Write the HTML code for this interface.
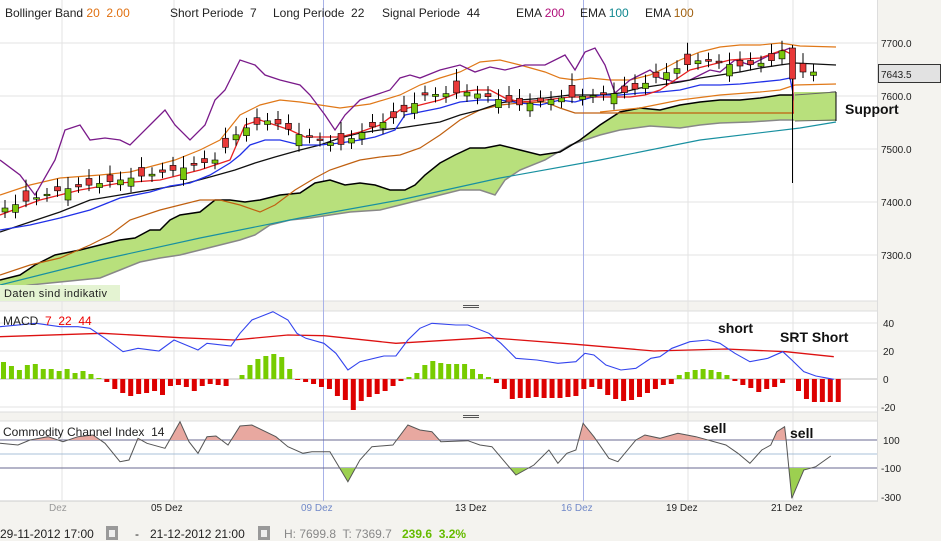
<!DOCTYPE html>
<html><head><meta charset="utf-8"><style>
html,body{margin:0;padding:0;width:941px;height:541px;overflow:hidden;background:#f4f3ef;font-family:"Liberation Sans",sans-serif;}
svg{position:absolute;left:0;top:0}
text{white-space:pre}
</style></head><body>
<svg id="s" width="941" height="541" xmlns="http://www.w3.org/2000/svg" font-family="Liberation Sans, sans-serif">
<defs>
<clipPath id="cu"><rect x="0" y="410" width="878" height="30"/></clipPath>
<clipPath id="cd"><rect x="0" y="468" width="878" height="40"/></clipPath>
</defs>
<rect x="0" y="0" width="878" height="301" fill="#fff"/>
<rect x="0" y="311" width="878" height="101" fill="#fff"/>
<rect x="0" y="421" width="878" height="80" fill="#fff"/>
<line x1="0" y1="301" x2="878" y2="301" stroke="#ddd"/>
<line x1="0" y1="311" x2="878" y2="311" stroke="#ddd"/>
<line x1="0" y1="412" x2="878" y2="412" stroke="#ddd"/>
<line x1="0" y1="421" x2="878" y2="421" stroke="#ddd"/>
<line x1="0" y1="501" x2="878" y2="501" stroke="#ccc"/>
<line x1="877.5" y1="0" x2="877.5" y2="501" stroke="#ddd"/>
<g stroke="#555" stroke-width="1"><line x1="463" y1="305.5" x2="479" y2="305.5"/><line x1="463" y1="307.5" x2="479" y2="307.5"/><line x1="463" y1="415.5" x2="479" y2="415.5"/><line x1="463" y1="417.5" x2="479" y2="417.5"/></g>
<g stroke="#e3e3e3">
<line x1="0" y1="43" x2="877" y2="43"/><line x1="0" y1="96" x2="877" y2="96"/><line x1="0" y1="149" x2="877" y2="149"/><line x1="0" y1="202" x2="877" y2="202"/><line x1="0" y1="255" x2="877" y2="255"/>
<line x1="0" y1="323" x2="877" y2="323"/><line x1="0" y1="351" x2="877" y2="351"/><line x1="0" y1="407" x2="877" y2="407"/>
<line x1="62" y1="0" x2="62" y2="501"/><line x1="174" y1="0" x2="174" y2="501"/><line x1="688" y1="0" x2="688" y2="501"/><line x1="793" y1="0" x2="793" y2="501"/>
</g>
<g stroke="#a8b2e8"><line x1="323.5" y1="0" x2="323.5" y2="501"/><line x1="583.5" y1="0" x2="583.5" y2="501"/></g>
<line x1="0" y1="379" x2="877" y2="379" stroke="#bbb"/>
<g stroke="#6a6a90"><line x1="0" y1="440" x2="877" y2="440"/><line x1="0" y1="468" x2="877" y2="468"/></g>
<line x1="0" y1="454" x2="877" y2="454" stroke="#a8c0d8"/>
<g id="main"></g>
<g id="macd"></g>
<g id="cci"></g>
<g font-size="12" fill="#222">
<text x="5" y="17">Bollinger Band <tspan fill="#e07010">20  2.00</tspan></text>
<text x="170" y="17">Short Periode  7</text>
<text x="273" y="17">Long Periode  22</text>
<text x="382" y="17">Signal Periode  44</text>
<text x="516" y="17">EMA <tspan fill="#b0107a">200</tspan></text>
<text x="580" y="17">EMA <tspan fill="#108890">100</tspan></text>
<text x="645" y="17">EMA <tspan fill="#a06010">100</tspan></text>
<text x="3" y="325">MACD  <tspan fill="#e00">7  22  44</tspan></text>
<text x="3" y="436">Commodity Channel Index  14</text>
</g>
<rect x="0" y="285" width="120" height="16" fill="#e4f3d2"/>
<text x="4" y="297" font-size="11" fill="#222" letter-spacing="0.4">Daten sind indikativ</text>
<g font-size="14" font-weight="bold" fill="#111">
<text x="845" y="114">Support</text>
<text x="718" y="333">short</text>
<text x="780" y="342">SRT Short</text>
<text x="703" y="433">sell</text>
<text x="790" y="438">sell</text>
</g>
<g font-size="10" fill="#222">
<text x="881" y="47">7700.0</text><text x="881" y="100">7600.0</text><text x="881" y="153">7500.0</text><text x="881" y="206">7400.0</text><text x="881" y="259">7300.0</text>
<text x="883" y="327">40</text><text x="883" y="355">20</text><text x="883" y="383">0</text><text x="881" y="411">-20</text>
<text x="883" y="444">100</text><text x="881" y="472">-100</text><text x="881" y="501">-300</text>
</g>
<rect x="878.5" y="64.5" width="62" height="18" fill="#e2e2e2" stroke="#333"/>
<text x="881" y="78" font-size="10" fill="#222">7643.5</text>
<g font-size="10">
<text x="49" y="511" fill="#999">Dez</text>
<text x="151" y="511" fill="#222">05 Dez</text>
<text x="301" y="511" fill="#7088c8">09 Dez</text>
<text x="455" y="511" fill="#222">13 Dez</text>
<text x="561" y="511" fill="#7088c8">16 Dez</text>
<text x="666" y="511" fill="#222">19 Dez</text>
<text x="771" y="511" fill="#222">21 Dez</text>
</g>
<g font-size="12" fill="#222">
<text x="0" y="538">29-11-2012 17:00</text>
<text x="135" y="538">-</text>
<text x="150" y="538">21-12-2012 21:00</text>
<text x="284" y="538" fill="#888">H: 7699.8  T: 7369.7</text>
<text x="402" y="538" fill="#66bb00" font-weight="bold">239.6  3.2%</text>
</g>
<g><rect x="106" y="526" width="12" height="14" fill="#999"/><rect x="109" y="530" width="6" height="7" fill="#eee"/><rect x="258" y="526" width="12" height="14" fill="#999"/><rect x="261" y="530" width="6" height="7" fill="#eee"/></g>
</svg>
<script>
const NS="http://www.w3.org/2000/svg";
function el(p,t,a){const e=document.createElementNS(NS,t);for(const k in a)e.setAttribute(k,a[k]);document.getElementById(p).appendChild(e);return e;}
function pts(a){return a.map(p=>p.join(",")).join(" ");}
function line(p,a,c,w){el(p,"polyline",{points:pts(a),fill:"none",stroke:c,"stroke-width":w||1});}
function interp(a,x){for(let i=1;i<a.length;i++){if(x<=a[i][0]){const t=(x-a[i-1][0])/(a[i][0]-a[i-1][0]);return a[i-1][1]+t*(a[i][1]-a[i-1][1]);}}return a[a.length-1][1];}
const up=[[0,280],[20,275],[35,265],[55,255],[80,250],[100,245],[120,240],[135,238],[150,230],[160,230],[170,220],[180,215],[200,212],[215,200],[230,200],[245,202],[260,200],[280,195],[300,193],[315,183],[330,180],[345,185],[360,183],[375,185],[390,190],[405,190],[415,185],[425,175],[440,163],[455,155],[470,148],[485,148],[500,145],[520,150],[540,155],[560,152],[580,140],[600,125],[620,112],[640,108],[660,110],[680,105],[700,102],[720,100],[740,100],[760,98],[780,95],[790,95],[810,95],[836,92]];
const lo=[[0,290],[30,285],[60,282],[100,278],[120,270],[140,262],[160,258],[180,255],[200,250],[220,245],[240,240],[255,235],[270,225],[290,220],[310,218],[330,215],[350,212],[380,210],[400,205],[420,200],[440,195],[460,190],[480,190],[495,195],[505,180],[520,170],[545,160],[570,145],[600,135],[620,130],[650,126],[680,128],[700,125],[720,123],[750,122],[780,120],[800,120],[836,116]];
el("main","polygon",{points:pts(up.concat(lo.slice().reverse())),fill:"#b8e07c"});
line("main",lo,"#888",1.5);line("main",up,"#000",1.5);
line("main",[[0,285],[100,260],[200,238],[300,218],[400,200],[500,178],[600,160],[700,140],[800,128],[836,122]],"#1890a0",1.2);
line("main",[[0,275],[30,265],[60,258],[90,245],[110,235],[130,220],[160,210],[180,205],[200,200],[220,200],[240,205],[260,212],[275,205],[295,190],[315,178],[330,170],[345,165],[360,160],[380,157],[400,155],[420,148],[440,135],[460,120],[480,110],[500,105],[520,103],[545,102],[560,108],[575,113],[612,113],[700,113],[836,113]],"#c06010",1.2);
line("main",[[0,195],[30,185],[60,178],[100,175],[130,172],[175,160],[200,150],[220,140],[240,115],[260,105],[280,100],[300,102],[320,105],[340,108],[370,104],[400,95],[420,85],[440,78],[460,72],[480,62],[500,60],[520,65],[545,72],[560,78],[575,80],[590,78],[610,80],[630,80],[650,75],[665,68],[680,60],[700,52],[720,47],[740,45],[760,45],[780,43],[800,46],[836,47]],"#e07818",1.2);
line("main",[[600,112],[640,108],[680,100],[720,95],[760,92],[780,90],[795,85],[836,84]],"#e07818",1.2);
line("main",[[0,160],[20,175],[35,195],[55,160],[65,130],[80,125],[90,140],[105,138],[120,140],[130,145],[150,125],[165,110],[175,125],[190,140],[205,125],[215,100],[225,90],[240,60],[255,65],[265,75],[280,80],[300,85],[310,95],[325,115],[335,130],[345,115],[360,100],[375,95],[390,90],[400,78],[410,75],[420,78],[440,70],[460,65],[475,72],[490,67],[505,70],[525,65],[545,65],[565,55],[575,70],[585,52],[595,48],[605,65],[615,93],[630,80],[640,75],[650,70],[660,78],[675,82],[690,80],[700,75],[710,70],[720,72],[735,60],[750,65],[760,60],[770,55],[780,52],[790,48]],"#7a1a8a",1.3);
line("main",[[0,232],[30,222],[60,212],[90,200],[120,195],[150,190],[180,185],[210,177],[235,170],[255,163],[275,157],[300,150],[320,145],[340,138],[360,133],[380,130],[400,128],[420,125],[440,122],[460,115],[480,110],[500,103],[520,100],[545,98],[570,95],[600,95],[620,93],[640,88],[660,85],[680,82],[700,78],[720,75],[740,72],[760,68],[780,65],[795,63],[836,65]],"#111",1.3);
line("main",[[0,230],[30,225],[60,218],[90,210],[120,198],[150,192],[170,186],[190,183],[210,175],[230,163],[240,155],[250,145],[265,140],[280,140],[300,145],[320,145],[340,143],[360,140],[375,137],[395,130],[405,115],[420,112],[440,108],[460,102],[480,100],[500,100],[520,103],[540,105],[560,100],[575,102],[600,95],[620,95],[640,93],[660,92],[680,90],[700,85],[720,85],[740,84],[760,82],[780,80],[790,78],[797,113]],"#2030e8",1.3);
line("main",[[0,215],[40,200],[80,190],[120,183],[160,180],[200,170],[230,160],[245,125],[260,120],[275,125],[290,130],[305,137],[320,137],[340,137],[360,132],[380,125],[400,110],[420,105],[440,100],[460,92],[475,90],[490,90],[505,98],[520,102],[545,100],[570,97],[600,97],[630,97],[645,95],[660,90],[675,80],[690,70],[710,65],[730,60],[760,58],[783,50],[793,55],[793,113],[836,113]],"#e82020",1.3);
el("main","rect",{x:794,y:92,width:42,height:29,fill:"#b8e07c"});
line("main",[[795,95],[836,92]],"#666",1);line("main",[[795,121],[836,120]],"#666",1);line("main",[[836,92],[836,121]],"#000",1);
const cp=[[5,208],[60,190],[120,180],[175,170],[215,160],[240,130],[270,120],[300,135],[340,145],[370,128],[400,115],[425,95],[470,92],[520,105],[560,98],[600,95],[630,92],[660,75],[700,60],[740,66],[770,62],[785,48],[795,72],[836,72]];
for(let i=0;i<78;i++){const x=5+i*10.5;if(x>830)break;
 let c=interp(cp,x);const n=Math.sin(i*2.3)*8+Math.cos(i*1.1)*4;const o=c+n;const g=o>c;
 let top=Math.min(o,c),bot=Math.max(o,c);if(bot-top<1.5)bot=top+1.5;
 if(x>787&&x<797){el("main","line",{x1:x,y1:45,x2:x,y2:183,stroke:"#000"});el("main","rect",{x:x-3,y:48,width:6,height:31,fill:"#e83838",stroke:"#000","stroke-width":0.6});continue;}
 el("main","line",{x1:x,y1:top-6-Math.abs(n)/2,x2:x,y2:bot+6,stroke:"#000"});
 el("main","rect",{x:x-3,y:top,width:6,height:bot-top,fill:g?"#7ac70c":"#e83838",stroke:"#000","stroke-width":0.6});}
const h=[17,13,9,14,15,10,10,8,10,6,8,5,1,-3,-10,-14,-17,-15,-14,-12,-16,-7,-6,-8,-12,-7,-5,-6,-7,0,4,14,20,23,25,22,10,-1,-3,-5,-8,-10,-17,-21,-31,-22,-18,-15,-12,-7,-2,2,6,14,18,16,15,15,15,10,5,2,-4,-10,-20,-19,-19,-18,-19,-19,-19,-18,-17,-10,-8,-10,-16,-20,-22,-21,-18,-14,-10,-6,-5,4,7,9,10,9,7,4,-2,-6,-9,-13,-10,-8,-4,0,-12,-20,-23,-23,-23,-23];
h.forEach((v,i)=>{const x=1+i*7.95;if(!v)return;el("macd","rect",{x:x,y:v>0?379-v:379,width:5,height:Math.abs(v),fill:v>0?"#77cc00":"#dd0000"});});
const bz=[[0,110],[60,100],[100,110],[130,110],[150,115],[175,145],[205,185],[230,175],[265,183],[290,150],[310,165],[330,180],[345,160],[385,168],[400,130],[420,90],[455,65],[480,90],[495,130],[510,145],[540,160],[560,190],[580,240],[600,215],[640,198],[660,198],[680,150],[700,115],[720,100],[760,105],[780,105],[815,130],[835,160],[860,205],[895,210],[930,220],[960,215],[975,190],[990,195],[1010,225],[1035,240],[1060,235],[1085,205],[1100,200],[1120,175],[1150,155],[1180,150],[1200,160],[1225,190],[1250,215],[1280,205],[1305,185],[1320,210],[1340,245],[1360,258],[1390,268]];
const cv=a=>a.map(p=>[+(p[0]/1.667).toFixed(1),+(290+p[1]/3).toFixed(1)]);
line("macd",cv([[0,140],[170,130],[300,143],[390,150],[480,135],[540,137],[660,160],[815,143],[960,163],[1090,183],[1210,177],[1310,185],[1390,200]]),"#dd1111",1.3);
line("macd",cv(bz),"#3344ee",1.1);
const cz=cv([[0,460],[30,465],[50,450],[80,440],[105,455],[130,440],[155,435],[175,460],[200,515],[215,510],[230,445],[245,460],[275,475],[300,395],[315,455],[330,490],[345,440],[360,438],[380,465],[400,408],[420,405],[460,440],[480,470],[505,490],[520,485],[550,485],[580,575],[600,510],[620,470],[655,465],[680,405],[700,420],[720,425],[735,455],[780,452],[800,465],[820,470],[860,555],[890,525],[915,480],[930,520],[945,490],[960,480],[972,400],[990,440],[1015,505],[1030,515],[1060,450],[1075,435],[1100,445],[1130,430],[1160,440],[1210,465],[1230,490],[1250,520],[1270,480],[1285,465],[1295,425],[1308,410],[1310,440],[1320,625],[1340,540],[1360,530],[1385,498]]);
const f=cz[0][0],l=cz[cz.length-1][0];
el("cci","polygon",{points:pts([[f,440]].concat(cz,[[l,440]])),fill:"#e8a8a0","clip-path":"url(#cu)"});
el("cci","polygon",{points:pts([[f,468]].concat(cz,[[l,468]])),fill:"#9cd050","clip-path":"url(#cd)"});
line("cci",cz,"#555",1);
</script>
</body></html>
